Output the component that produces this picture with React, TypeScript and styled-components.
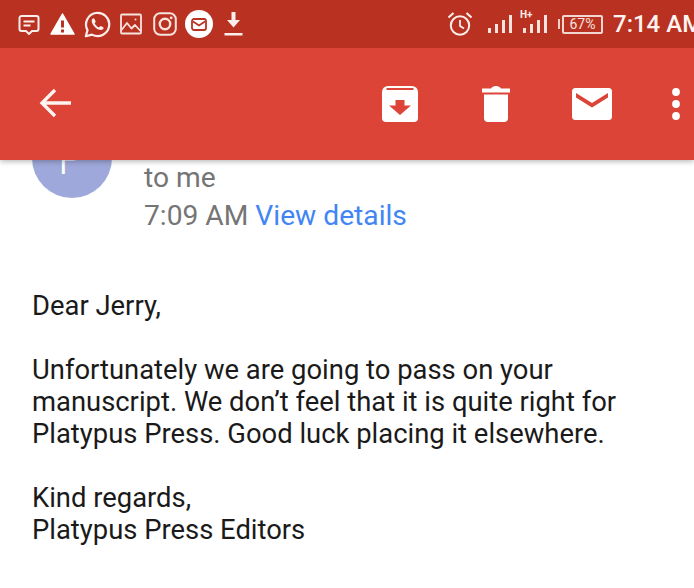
import styled, { createGlobalStyle } from 'styled-components';

const GlobalStyle = createGlobalStyle`
  html, body {
    margin: 0;
    padding: 0;
    background: #ffffff;
    overflow: hidden;
  }
  body {
    font-family: Roboto, "Liberation Sans", sans-serif;
  }
  svg {
    flex-shrink: 0;
    display: block;
  }
`;

function Signal() {
  return (
    <svg width="25" height="18" viewBox="0 0 25 18" fill="#f8e3df">
      <rect x="0" y="13" width="3" height="5" />
      <rect x="7" y="9" width="3" height="9" />
      <rect x="14" y="5" width="3" height="13" />
      <rect x="21" y="0" width="3" height="18" />
    </svg>
  );
}

function App() {
  return (
    <Page>
      <GlobalStyle />
      <Top>
        <StatusBar>
          <StatusGroup>
            <svg width="22" height="22" viewBox="0 0 22 22" fill="none" stroke="#fbeeeb" strokeWidth="2">
              <path d="M3.500 3h15a2 2 0 0 1 2 2v11a2 2 0 0 1-2 2h-4.500l-3 3-3-3H3.500a2 2 0 0 1-2-2V5a2 2 0 0 1 2-2z" />
              <path d="M5.500 8.500h11M5.500 12.500h7" strokeWidth="1.800" />
            </svg>
            <WarnIcon width="25" height="22" viewBox="0 0 25 22">
              <path d="M12.500 1L24 21H1z" fill="#ffffff" stroke="#ffffff" strokeWidth="1.500" strokeLinejoin="round" />
              <rect x="11" y="7.500" width="3" height="7" fill="#b93221" />
              <rect x="11" y="16.500" width="3" height="3" fill="#b93221" />
            </WarnIcon>
            <svg width="27" height="27" viewBox="0 0 27 27" fill="none">
              <path d="M1.800 25.300l1.700-6.200A11.600 11.600 0 1 1 8 23.600z" stroke="#fbeeeb" strokeWidth="2.200" strokeLinejoin="round" />
              <path d="M9.500 7.200c-.7 0-1.800 1-1.800 2.800 0 3.800 5.300 9 9 9 1.900 0 2.900-1.200 2.900-2 0-.6-2.500-1.900-3-1.900-.5 0-1.100 1.300-1.600 1.300-1.200 0-4-2.800-4.300-4.100 0-.5 1-1 1-1.600 0-.6-1.200-3.500-2.200-3.500z" fill="#fbeeeb" />
            </svg>
            <svg width="22" height="22" viewBox="0 0 22 22" fill="none" stroke="#f8e3df" strokeWidth="1.800">
              <rect x="1" y="1.500" width="20" height="19" rx="1" />
              <path d="M1.500 17l5.500-7 4.500 5.500 3.500-3.500 5.500 6" strokeLinejoin="round" />
              <circle cx="15.500" cy="6.500" r="1" fill="#f8e3df" stroke="none" />
            </svg>
            <InstaIcon width="24" height="24" viewBox="0 0 24 24" fill="none" stroke="#f8e3df" strokeWidth="2">
              <rect x="1.200" y="1.200" width="21.600" height="21.600" rx="6" />
              <circle cx="12" cy="12" r="5.200" strokeWidth="2.400" />
              <circle cx="18.200" cy="5.800" r="1.400" fill="#f8e3df" stroke="none" />
            </InstaIcon>
            <MailBadge>
              <svg width="16" height="13" viewBox="0 0 16 13" fill="none" stroke="#b93221" strokeWidth="1.800">
                <rect x="1" y="1" width="14" height="11" rx="2" />
                <path d="M2 3.500l6 4 6-4" />
              </svg>
            </MailBadge>
            <DownloadIcon width="19" height="24" viewBox="0 0 19 24" fill="#fbeeeb">
              <path d="M7.500 0h4v8H16L9.500 15.500 3 8h4.500z" />
              <rect x="0.500" y="21" width="18" height="2.500" />
            </DownloadIcon>
          </StatusGroup>
          <StatusRight>
            <svg width="26" height="26" viewBox="0 0 26 26" fill="none" stroke="#fbeeeb" strokeWidth="2">
              <circle cx="13" cy="14.500" r="9.200" />
              <path d="M13 9v6l4 2.500" strokeWidth="1.800" />
              <path d="M1.500 6.500L6.500 2M24.500 6.500L19.500 2" strokeWidth="2.200" />
            </svg>
            <Bars $gap={15}>
              <Signal />
            </Bars>
            <Bars $gap={10}>
              <NetworkLabel>H+</NetworkLabel>
              <Signal />
            </Bars>
            <Battery>
              <BatteryCap />
              <BatteryBody>67%</BatteryBody>
            </Battery>
            <Clock>7:14 AM</Clock>
          </StatusRight>
        </StatusBar>
        <Toolbar>
          <svg width="32" height="32" viewBox="0 0 32 32" fill="none" stroke="#fdf3f1" strokeWidth="3.400">
            <path d="M32 15H3M16 2L3 15l13 13" />
          </svg>
          <ToolActions>
            <svg width="36" height="36" viewBox="0 0 36 36">
              <path d="M6 0h24a6 6 0 0 1 6 6v26a4 4 0 0 1-4 4H4a4 4 0 0 1-4-4V6a6 6 0 0 1 6-6z" fill="#ffffff" />
              <rect x="4.500" y="2" width="27" height="2" fill="#db4437" />
              <path d="M13.500 14h9v5.500H29L18 29 7 19.500h6.500z" fill="#db4437" />
            </svg>
            <TrashIcon width="28" height="36" viewBox="0 0 28 36" fill="#ffffff">
              <path d="M0 2.500h9C10 1 11.500 0 14 0s4 1 5 2.500h9v4H0z" />
              <path d="M2 8.500h24V32a4 4 0 0 1-4 4H6a4 4 0 0 1-4-4z" />
            </TrashIcon>
            <svg width="40" height="32" viewBox="0 0 40 32">
              <rect width="40" height="32" rx="3.500" fill="#ffffff" />
              <path d="M4 5l16 10L36 5v4.500L20 19.500 4 9.500z" fill="#db4437" />
            </svg>
            <DotsIcon width="8" height="32" viewBox="0 0 8 32" fill="#ffffff">
              <circle cx="4" cy="4" r="3.900" />
              <circle cx="4" cy="16" r="3.900" />
              <circle cx="4" cy="28" r="3.900" />
            </DotsIcon>
          </ToolActions>
        </Toolbar>
      </Top>
      <Header>
        <Avatar>
          <AvatarLetter>P</AvatarLetter>
        </Avatar>
        <Meta>
          <MetaLine>to me</MetaLine>
          <MetaLine>
            7:09 AM <DetailsLink>View details</DetailsLink>
          </MetaLine>
        </Meta>
      </Header>
      <Body>
        <Paragraph>Dear Jerry,</Paragraph>
        <Paragraph>
          Unfortunately we are going to pass on your
          <br />
          manuscript. We don’t feel that it is quite right for
          <br />
          Platypus Press. Good luck placing it elsewhere.
        </Paragraph>
        <Paragraph>
          Kind regards,
          <br />
          Platypus Press Editors
        </Paragraph>
      </Body>
    </Page>
  );
}

export default App;

const Page = styled.div`
  width: 694px;
  height: 588px;
  overflow: hidden;
  background: #ffffff;
`;

const Top = styled.div`
  position: relative;
  z-index: 2;
  box-shadow: 0 2px 5px rgba(0, 0, 0, 0.25);
`;

const StatusBar = styled.div`
  height: 48px;
  box-sizing: border-box;
  background: #b93221;
  display: flex;
  align-items: center;
  justify-content: space-between;
  padding-left: 18px;
`;

const StatusGroup = styled.div`
  display: flex;
  align-items: center;
  gap: 9px;
`;

const WarnIcon = styled.svg`
  margin-left: 1px;
`;

const InstaIcon = styled.svg`
  margin-left: 2px;
`;

const MailBadge = styled.div`
  width: 28px;
  height: 28px;
  margin-left: -1px;
  border-radius: 50%;
  background: #ffffff;
  display: flex;
  align-items: center;
  justify-content: center;
`;

const DownloadIcon = styled.svg`
  margin-left: 2px;
`;

const StatusRight = styled.div`
  display: flex;
  align-items: center;
  width: 247px;
  height: 48px;
  flex-shrink: 0;
  white-space: nowrap;
`;

const Bars = styled.div<{ $gap: number }>`
  position: relative;
  margin-left: ${(p) => p.$gap}px;
  display: flex;
`;

const NetworkLabel = styled.span`
  position: absolute;
  left: -3px;
  top: -6px;
  font-size: 10px;
  line-height: 12px;
  font-weight: 700;
  color: #fbeeeb;
`;

const Battery = styled.div`
  display: flex;
  align-items: center;
  margin-left: 10px;
`;

const BatteryCap = styled.div`
  width: 2px;
  height: 10px;
  background: #f3cfc8;
`;

const BatteryBody = styled.div`
  width: 41px;
  height: 19px;
  margin-left: 2px;
  border: 2px solid rgba(255, 255, 255, 0.8);
  border-radius: 2px;
  box-sizing: border-box;
  font-size: 14px;
  line-height: 15px;
  text-align: center;
  color: #f8e3df;
`;

const Clock = styled.span`
  margin-left: 10px;
  font-size: 24px;
  font-weight: 500;
  color: #fdf3f1;
`;

const Toolbar = styled.div`
  height: 112px;
  box-sizing: border-box;
  background: #db4437;
  display: flex;
  align-items: center;
  justify-content: space-between;
  padding: 0 14px 0 39px;
`;

const ToolActions = styled.div`
  display: flex;
  align-items: center;
  gap: 62px;
`;

const TrashIcon = styled.svg`
  margin-left: 2px;
`;

const DotsIcon = styled.svg`
  margin-left: -2px;
`;

const Header = styled.div`
  display: flex;
  margin-top: -42px;
  padding-left: 32px;
`;

const Avatar = styled.div`
  width: 80px;
  height: 80px;
  border-radius: 50%;
  background: #9fa8da;
  flex-shrink: 0;
  display: flex;
  align-items: center;
  justify-content: center;
`;

const AvatarLetter = styled.span`
  font-size: 46px;
  font-weight: 300;
  color: #ffffff;
`;

const Meta = styled.div`
  margin-left: 32px;
  padding-top: 41px;
  display: flex;
  flex-direction: column;
`;

const MetaLine = styled.div`
  font-size: 28.200px;
  line-height: 38px;
  color: #757575;
`;

const DetailsLink = styled.span`
  color: #4285f4;
`;

const Body = styled.div`
  padding: 0 0 0 32px;
  margin-top: 55px;
`;

const Paragraph = styled.p`
  margin: 0 0 32px;
  font-size: 27.400px;
  line-height: 32px;
  color: #1a1a1a;
`;
